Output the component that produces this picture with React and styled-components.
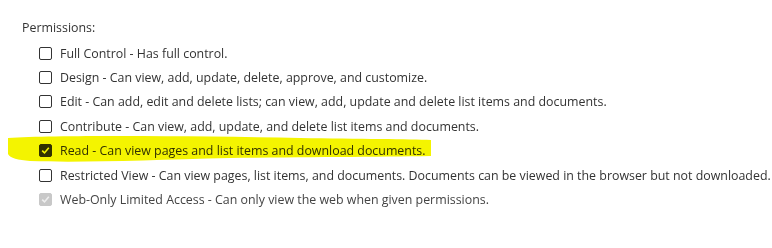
import React from "react";
import styled, { createGlobalStyle } from "styled-components";

const Global = createGlobalStyle`
  html, body { margin: 0; padding: 0; background: #fff; }
  body { font-family: "Segoe UI", "Open Sans", "Noto Sans", sans-serif; }
`;

const Page = styled.div`
  position: relative;
  width: 772px;
  height: 248px;
  padding: 18px 0 0 22px;
  box-sizing: border-box;
  color: #333;
  font-size: 12.4px;
  overflow: hidden;
`;

const Title = styled.div`
  line-height: 20px;
  margin-bottom: 3px;
`;

const List = styled.div`
  display: flex;
  flex-direction: column;
  padding-left: 17px;
`;

const Row = styled.label`
  position: relative;
  z-index: 1;
  display: flex;
  align-items: center;
  gap: 8px;
  height: 24.4px;
  white-space: nowrap;
  color: ${(p) => (p.$disabled ? "#444" : "#333")};
`;

const Box = styled.span`
  flex: none;
  width: 13px;
  height: 13px;
  box-sizing: border-box;
  border-radius: 2px;
  border: 1px solid ${(p) => (p.$disabled ? "#c8c8c8" : "#333")};
  background: ${(p) => (p.$disabled ? "#c8c8c8" : p.$checked ? "#333" : "#fff")};
  display: flex;
  align-items: center;
  justify-content: center;
`;

const Highlight = styled.svg`
  position: absolute;
  left: 0;
  top: 0;
  pointer-events: none;
  z-index: 2;
  mix-blend-mode: multiply;
`;

const items = [
  { label: "Full Control - Has full control." },
  { label: "Design - Can view, add, update, delete, approve, and customize." },
  { label: "Edit - Can add, edit and delete lists; can view, add, update and delete list items and documents." },
  { label: "Contribute - Can view, add, update, and delete list items and documents." },
  { label: "Read - Can view pages and list items and download documents.", checked: true },
  { label: "Restricted View - Can view pages, list items, and documents. Documents can be viewed in the browser but not downloaded." },
  { label: "Web-Only Limited Access - Can only view the web when given permissions.", checked: true, disabled: true },
];

function Check({ color }) {
  return (
    <svg width="9" height="9" viewBox="0 0 9 9">
      <path d="M1.2 4.6 L3.5 6.9 L7.8 1.8" fill="none" stroke={color} strokeWidth="1.6" />
    </svg>
  );
}

export default function App() {
  return (
    <>
      <Global />
      <Page>
        <Title>Permissions:</Title>
        <List>
          {items.map((it) => (
            <Row key={it.label} $disabled={it.disabled}>
              <Box $checked={it.checked} $disabled={it.disabled}>
                {it.checked && <Check color={it.disabled ? "#eee" : "#fff"} />}
              </Box>
              <span>{it.label}</span>
            </Row>
          ))}
        </List>
        <Highlight width="772" height="248" viewBox="0 0 772 248">
          <path
            d="M8 138 C 60 135, 200 136, 300 138 C 360 139, 410 139, 431 140 L 431 156 C 380 157, 300 157, 230 158 C 150 160, 80 163, 30 161 C 18 160, 10 158, 8 154 Z"
            fill="#f4f400"
          />
        </Highlight>
      </Page>
    </>
  );
}
